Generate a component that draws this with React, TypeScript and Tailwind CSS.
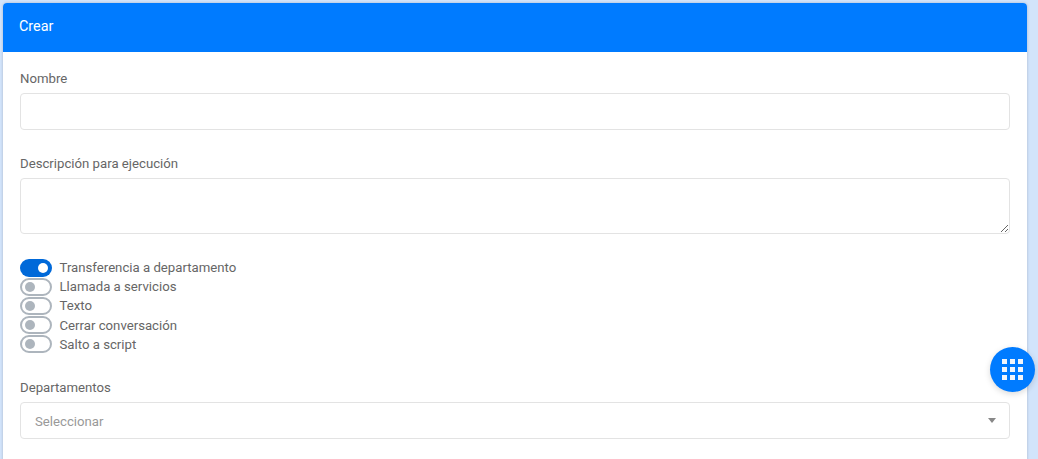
import React from "react";

const toggles = [
  { label: "Transferencia a departamento", on: true },
  { label: "Llamada a servicios", on: false },
  { label: "Texto", on: false },
  { label: "Cerrar conversación", on: false },
  { label: "Salto a script", on: false },
];

function Toggle({ label, on }: { label: string; on: boolean }) {
  return (
    <div className="flex h-[19.2px] items-center">
      {on ? (
        <span className="flex h-[18px] w-[32px] items-center justify-end rounded-full bg-[#0069d9] pr-[4px]">
          <span className="h-[10px] w-[10px] rounded-full bg-white" />
        </span>
      ) : (
        <span className="flex h-[18px] w-[32px] items-center rounded-full border-2 border-[#adb5bd] bg-white pl-[3px]">
          <span className="h-[10px] w-[10px] rounded-full bg-[#adb5bd]" />
        </span>
      )}
      <span className="ml-[7.5px] text-[13.2px] leading-[19px] text-[#666666]">{label}</span>
    </div>
  );
}

export default function App() {
  return (
    <div className="relative h-[459px] w-[1038px] overflow-hidden bg-[#d2e4fb] pl-[3px] pt-[3px] font-['Roboto',sans-serif]">
      <div className="h-[500px] w-[1024px] rounded-t-[4px] bg-white shadow-[0_0_3px_rgba(0,0,0,0.2)]">
        <div className="flex h-[49px] items-center rounded-t-[4px] bg-[#007bff] pb-[2px] pl-[16px] text-[14.4px] text-white">
          Crear
        </div>
        <div className="px-[17px]">
          <div className="pt-[17px] text-[13.2px] leading-[19px] text-[#666666]">Nombre</div>
          <input className="mt-[5px] block h-[37px] w-[990px] rounded-[4px] border border-[#e3e3e3] bg-white" />
          <div className="pt-[24px] text-[13.2px] leading-[19px] text-[#666666]">Descripción para ejecución</div>
          <textarea className="mt-[5px] block h-[56px] w-[990px] rounded-[4px] border border-[#e3e3e3] bg-white" />
          <div className="flex flex-col pt-[24px]">
            {toggles.map((t) => (
              <Toggle key={t.label} label={t.label} on={t.on} />
            ))}
          </div>
          <div className="pt-[24px] text-[13.2px] leading-[19px] text-[#666666]">Departamentos</div>
          <div className="mt-[5px] flex h-[37px] w-[990px] items-center justify-between rounded-[4px] border border-[#e3e3e3] bg-white pl-[14px] pr-[13px] text-[13.2px] text-[#999999]">
            <span className="pt-[2px]">Seleccionar</span>
            <span className="h-0 w-0 border-x-[4px] border-t-[5px] border-x-transparent border-t-[#888888]" />
          </div>
        </div>
      </div>
      <div className="absolute left-[990px] top-[347px] flex h-[45px] w-[45px] items-center justify-center rounded-full bg-[#007bff] shadow-[0_2px_6px_rgba(0,0,0,0.15)]">
        <div className="grid grid-cols-3 gap-[3px]">
          {Array.from({ length: 9 }).map((_, i) => (
            <span key={i} className="h-[5px] w-[5px] bg-[#f1f5fb]" />
          ))}
        </div>
      </div>
    </div>
  );
}
